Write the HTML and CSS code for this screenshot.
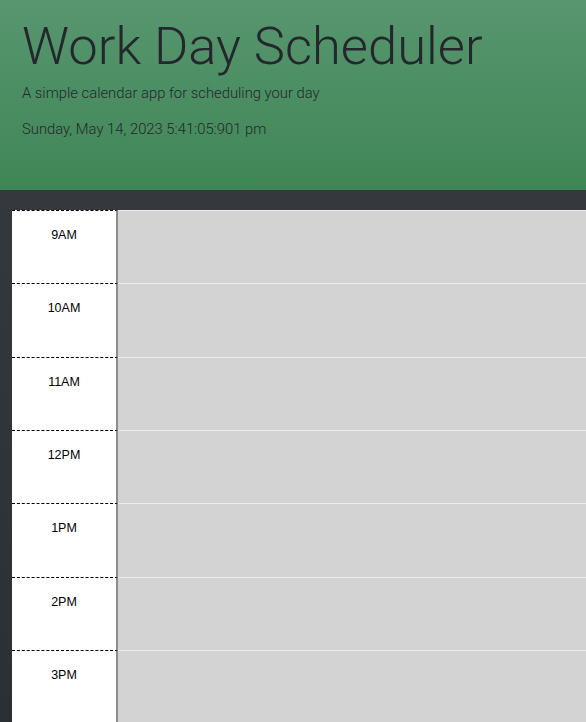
FILE: index.html
```html
<!DOCTYPE html>
<html lang="en">
<head>
<meta charset="utf-8">
<title>Work Day Scheduler</title>
<link rel="stylesheet" href="styles.css">
</head>
<body>
<header class="jumbotron">
  <h1 class="title">Work Day Scheduler</h1>
  <p class="lead">A simple calendar app for scheduling your day</p>
  <p class="current-day">Sunday, May 14, 2023 5:41:05:901 pm</p>
</header>
<main class="container">
  <div class="time-block"><div class="hour">9AM</div><textarea class="description"></textarea></div>
  <div class="time-block"><div class="hour">10AM</div><textarea class="description"></textarea></div>
  <div class="time-block"><div class="hour">11AM</div><textarea class="description"></textarea></div>
  <div class="time-block"><div class="hour">12PM</div><textarea class="description"></textarea></div>
  <div class="time-block"><div class="hour">1PM</div><textarea class="description"></textarea></div>
  <div class="time-block"><div class="hour">2PM</div><textarea class="description"></textarea></div>
  <div class="time-block"><div class="hour">3PM</div><textarea class="description"></textarea></div>
</main>
</body>
</html>
```
FILE: styles.css
```css
html, body {
  margin: 0;
  padding: 0;
  height: 100%;
  overflow: hidden;
}
body {
  background: linear-gradient(to bottom, #383c41 0%, #2c2f33 100%);
  font-family: "Liberation Sans", Arial, sans-serif;
  color: #212529;
}
.jumbotron {
  height: 190px;
  box-sizing: border-box;
  padding: 14px 22px 0;
  background: linear-gradient(to bottom, #58966f 0%, #3f8656 100%);
}
.title {
  margin: 0;
  font-family: "Roboto", sans-serif;
  font-weight: 300;
  font-size: 52.5px;
  line-height: 64px;
  color: #24282c;
}
.lead {
  margin: 4px 0 0;
  font-family: "Roboto", sans-serif;
  font-weight: 300;
  font-size: 14.8px;
  line-height: 22px;
  color: #24282c;
}
.current-day {
  margin: 14px 0 0;
  font-family: "Roboto", sans-serif;
  font-weight: 300;
  font-size: 14.8px;
  line-height: 22px;
  color: #24282c;
}
.container {
  padding: 20px 0 0 12px;
}
.time-block {
  display: flex;
  height: 73.33px;
}
.hour {
  width: 106px;
  flex: none;
  box-sizing: border-box;
  background: #fff;
  border-top: 1px dashed #000;
  border-right: 2px solid #8c8c8c;
  padding-top: 17px;
  text-align: center;
  font-size: 12.5px;
  color: #000;
}
.description {
  flex: 1;
  margin: 0;
  box-sizing: border-box;
  border: none;
  border-top: 1px solid #ececec;
  background: #d3d3d3;
  resize: none;
  padding: 0;
}
```
